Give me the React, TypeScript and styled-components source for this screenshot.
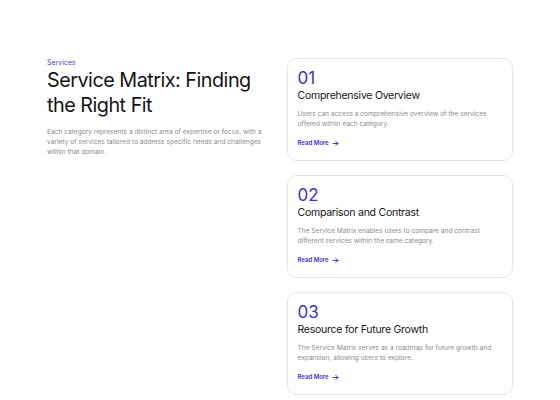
import React from "react";
import styled, { createGlobalStyle } from "styled-components";

const Global = createGlobalStyle`
  html, body { margin: 0; padding: 0; background: #ffffff; }
  body { font-family: Inter, "Noto Sans", sans-serif; -webkit-font-smoothing: antialiased; }
`;

const Page = styled.div`
  display: flex;
  align-items: flex-start;
  gap: 25px;
  padding: 58px 47px 0 47px;
  width: 560px;
  height: 400px;
  box-sizing: border-box;
  overflow: hidden;
`;

const Intro = styled.div`
  width: 215px;
  display: flex;
  flex-direction: column;
`;

const Eyebrow = styled.div`
  font-size: 7px;
  line-height: 9px;
  color: #4a3fd6;
`;

const Heading = styled.h1`
  margin: 1px 0 0 0;
  font-size: 19.8px;
  line-height: 25px;
  font-weight: 400;
  color: #141414;
  letter-spacing: -0.5px;
`;

const Lead = styled.p`
  margin: 9px 0 0 0;
  font-size: 6.6px;
  line-height: 10px;
  color: #8a8a8a;
`;

const Cards = styled.div`
  width: 227px;
  display: flex;
  flex-direction: column;
  gap: 14px;
`;

const Card = styled.div`
  box-sizing: border-box;
  height: 103px;
  border: 1px solid #e4e4e7;
  border-radius: 10px;
  padding: 9px 10px;
  display: flex;
  flex-direction: column;
  background: #ffffff;
`;

const Num = styled.div`
  font-size: 17px;
  line-height: 20px;
  color: #3d2fd3;
  font-weight: 400;
`;

const Title = styled.div`
  font-size: 10.5px;
  line-height: 14px;
  color: #161616;
  margin-top: 1px;
  letter-spacing: -0.25px;
`;

const Desc = styled.p`
  margin: 6px 0 0 0;
  font-size: 6.6px;
  line-height: 10px;
  color: #8c8c8c;
`;

const More = styled.a`
  margin-top: 10px;
  display: inline-flex;
  align-items: center;
  gap: 3px;
  font-size: 6px;
  line-height: 8px;
  font-weight: 600;
  color: #3d2fd3;
  text-decoration: none;
`;

const Arrow = () => (
  <svg width="7" height="7" viewBox="0 0 10 10" fill="none" stroke="#3d2fd3" strokeWidth="1.4" strokeLinecap="round" strokeLinejoin="round">
    <path d="M1.5 5h7M5.5 2l3 3-3 3" />
  </svg>
);

const items = [
  { n: "01", t: "Comprehensive Overview", d: "Users can access a comprehensive overview of the services offered within each category." },
  { n: "02", t: "Comparison and Contrast", d: "The Service Matrix enables users to compare and contrast different services within the same category." },
  { n: "03", t: "Resource for Future Growth", d: "The Service Matrix serves as a roadmap for future growth and expansion, allowing users to explore." },
];

export default function App() {
  return (
    <>
      <Global />
      <Page>
        <Intro>
          <Eyebrow>Services</Eyebrow>
          <Heading>Service Matrix: Finding the Right Fit</Heading>
          <Lead>
            Each category represents a distinct area of expertise or focus, with a variety of services tailored to address specific needs and challenges within that domain.
          </Lead>
        </Intro>
        <Cards>
          {items.map((it) => (
            <Card key={it.n}>
              <Num>{it.n}</Num>
              <Title>{it.t}</Title>
              <Desc>{it.d}</Desc>
              <More href="#">
                Read More <Arrow />
              </More>
            </Card>
          ))}
        </Cards>
      </Page>
    </>
  );
}
